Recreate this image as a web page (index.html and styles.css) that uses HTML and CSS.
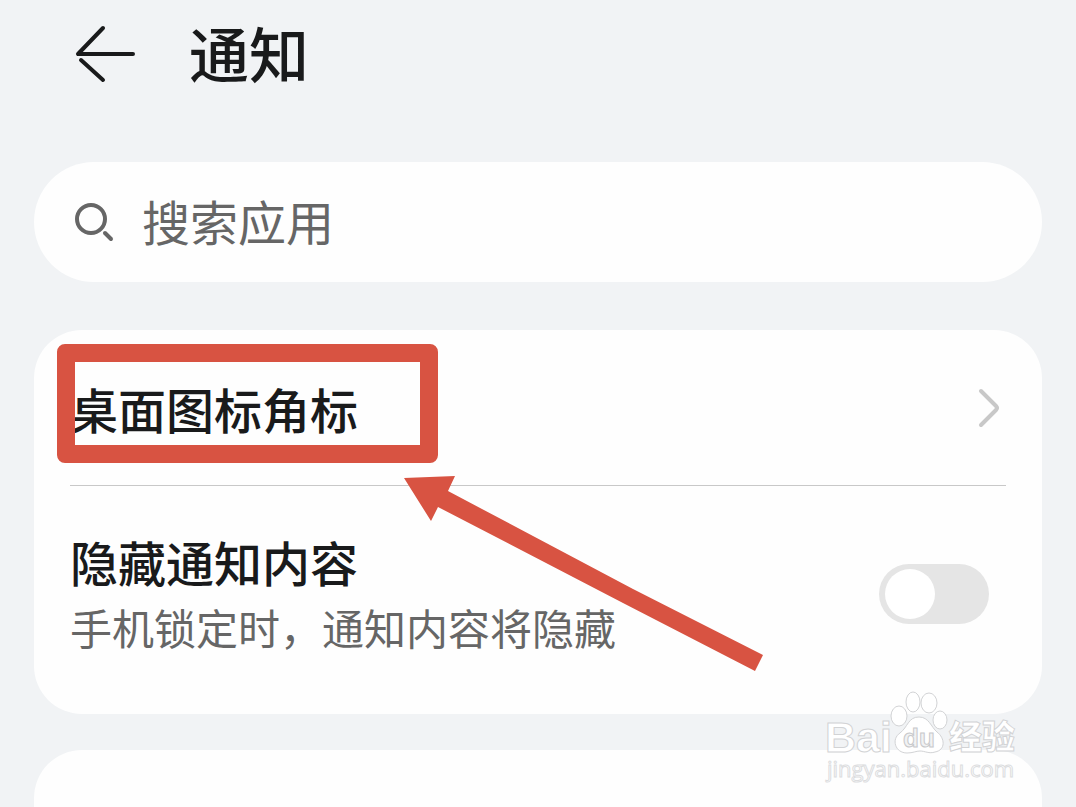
FILE: index.html
```html
<!DOCTYPE html>
<html lang="zh-CN">
<head>
  <meta charset="UTF-8">
  <title>通知</title>
  <link rel="stylesheet" href="styles.css">
</head>
<body>
  <div class="page">
    <header class="header">
      <button class="back-btn" type="button" aria-label="返回">
        <svg width="64" height="60" viewBox="0 0 64 60">
          <path d="M30 4 L5 30 H60 M8 36 L30 56" />
        </svg>
      </button>
      <h1>通知</h1>
    </header>

    <div class="search">
      <svg class="search-icon" width="40" height="40" viewBox="0 0 40 40">
        <circle cx="17" cy="17" r="14" />
        <path d="M31 31 L37 37" />
      </svg>
      <input type="text" placeholder="搜索应用" aria-label="搜索应用">
    </div>

    <main class="card">
      <a class="row row-link" href="#badges">
        <span class="row-title">桌面图标角标</span>
        <svg class="chevron" width="24" height="40" viewBox="0 0 24 40">
          <path d="M3 3 L18 18 Q20 20 18 22 L3 37" />
        </svg>
      </a>
      <div class="row row-switch">
        <label for="hideContent">
          <span class="row-title">隐藏通知内容</span>
          <span class="row-sub">手机锁定时，通知内容将隐藏</span>
        </label>
        <input class="switch" type="checkbox" id="hideContent">
      </div>

      <div class="highlight"></div>
      <svg class="arrow" width="362" height="200" viewBox="0 0 362 200">
        <path d="M1 3 L52 1 L45 16 L230 114 L360 180 L352 196 L220 128 L35 32 L28 46 Z" />
      </svg>
    </main>

    <section class="card card-next"></section>

    <svg class="watermark" width="200" height="104" viewBox="0 0 200 104">
      <g class="mark-bold">
        <text x="1" y="67" font-size="43">Bai</text>
        <text class="mark-cn" x="125" y="64" font-size="33">经验</text>
      </g>
      <g class="mark-paw">
        <ellipse cx="75" cy="31" rx="8" ry="10" />
        <ellipse cx="89" cy="17" rx="7" ry="10" />
        <ellipse cx="105" cy="18" rx="8" ry="10" />
        <ellipse cx="116" cy="35" rx="7" ry="9" />
        <path d="M95 32 C84 32 84 42 76 48 C67 54 71 68 83 68 C89 68 92 66 96 66 C101 66 105 69 111 67 C122 65 121 53 113 47 C107 42 105 32 95 32 Z" />
      </g>
      <text class="mark-du" x="79" y="62" font-size="26">du</text>
      <text class="mark-url" x="3" y="92" font-size="22">jingyan.baidu.com</text>
    </svg>
  </div>
</body>
</html>
```
FILE: styles.css
```css
:root {
  --bg-color: #f1f3f5;
  --card-bg: #fefefe;
  --text-color: #191a1b;
  --sub-color: #666;
  --mark-red: #d85342;
}

* {
  box-sizing: border-box;
}

body {
  margin: 0;
  font-family: "Noto Sans CJK SC", sans-serif;
  background-color: var(--bg-color);
  color: var(--text-color);
}

.page {
  position: relative;
  display: flex;
  flex-direction: column;
  height: 100vh;
  padding: 0 34px;
  overflow: hidden;
}

.header {
  display: flex;
  flex-shrink: 0;
  align-items: center;
  gap: 52px;
  height: 108px;
  margin-bottom: 54px;
  padding-left: 39px;
}

.header h1 {
  margin: 0;
  padding-bottom: 4px;
  font-size: 60px;
  font-weight: 500;
  line-height: 80px;
}

.back-btn {
  display: flex;
  padding: 0;
  border: none;
  background: none;
  cursor: pointer;
}

.back-btn path {
  fill: none;
  stroke: var(--text-color);
  stroke-width: 4;
  stroke-linecap: round;
  stroke-linejoin: round;
}

.search {
  display: flex;
  flex-shrink: 0;
  align-items: center;
  gap: 28px;
  height: 120px;
  margin-bottom: 48px;
  padding: 0 40px;
  border-radius: 60px;
  background-color: var(--card-bg);
}

.search-icon {
  flex-shrink: 0;
  fill: none;
  stroke: var(--sub-color);
  stroke-width: 4;
  stroke-linecap: round;
}

.search input {
  flex: 1;
  min-width: 0;
  padding: 0 0 4px;
  border: none;
  outline: none;
  background: none;
  color: var(--text-color);
  font-family: inherit;
  font-size: 48px;
  line-height: 72px;
}

.search input::placeholder {
  color: var(--sub-color);
  opacity: 1;
}

.card {
  position: relative;
  flex-shrink: 0;
  padding: 0 36px 12px;
  border-radius: 48px;
  background-color: var(--card-bg);
}

.card-next {
  flex: 1 0 0;
  margin-top: 36px;
  border-radius: 48px 48px 0 0;
}

.row {
  display: flex;
  align-items: center;
  justify-content: space-between;
}

.row-link {
  height: 156px;
  padding-right: 4px;
  border-bottom: 1px solid #c8c8c8;
  color: inherit;
  text-decoration: none;
}

.row-switch {
  height: 216px;
  padding-right: 17px;
}

.row-title {
  display: block;
  font-size: 48px;
  font-weight: 500;
  line-height: 66px;
}

.row-sub {
  display: block;
  color: var(--sub-color);
  font-size: 42px;
  line-height: 66px;
}

.chevron {
  fill: none;
  stroke: #c8c8c8;
  stroke-width: 4;
  stroke-linecap: round;
}

.switch {
  display: flex;
  flex-shrink: 0;
  align-items: center;
  width: 110px;
  height: 60px;
  margin: 0;
  padding: 0 6px;
  border-radius: 30px;
  background-color: #e5e5e5;
  appearance: none;
  cursor: pointer;
}

.switch::before {
  content: "";
  width: 50px;
  height: 50px;
  border-radius: 50%;
  background-color: #fff;
}

.switch:checked {
  justify-content: flex-end;
  background-color: #007dff;
}

/* red frame and arrow drawn over the card */
.highlight {
  position: absolute;
  top: 14px;
  left: 23px;
  width: 381px;
  height: 119px;
  border: 18px solid var(--mark-red);
  border-radius: 8px;
  pointer-events: none;
}

.arrow {
  position: absolute;
  top: 145px;
  left: 369px;
  fill: var(--mark-red);
  pointer-events: none;
}

.watermark {
  position: absolute;
  right: 52px;
  bottom: 18px;
  fill: #fff;
  stroke: #d2d3d5;
  stroke-width: 1;
  font-family: "Liberation Sans", sans-serif;
  pointer-events: none;
}

.mark-bold {
  font-weight: bold;
}

.mark-cn {
  font-family: "Noto Sans CJK SC", sans-serif;
  font-weight: 900;
}

.mark-du {
  fill: #f1f2f3;
  stroke: #c8c9cb;
  font-weight: bold;
}

.mark-url {
  stroke: #dcdddf;
  font-family: "Open Sans", sans-serif;
}
```
